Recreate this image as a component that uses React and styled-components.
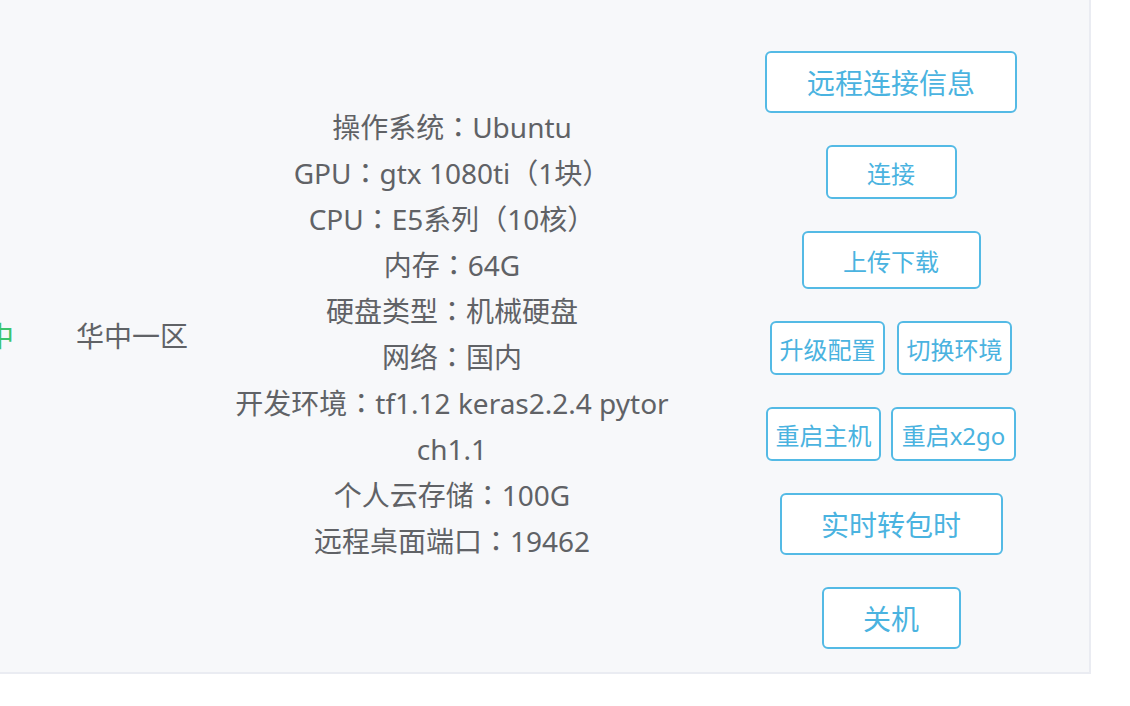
import styled, { createGlobalStyle } from 'styled-components'

const GlobalStyle = createGlobalStyle`
body {
  margin: 0;
  background: #fff;
  font-family: "Noto Sans", "Noto Sans CJK TC", sans-serif;
}
`

const Panel = styled.div`
width: 1089px;
height: 672px;
background: #f7f8fa;
border-right: 2px solid #eaecf2;
border-bottom: 2px solid #eaecf2;
display: flex;
align-items: center;
`

const StatusCell = styled.div`
width: 14px;
flex: none;
overflow: hidden;
display: flex;
justify-content: flex-end;
white-space: nowrap;
font-size: 28px;
line-height: 46px;
color: #3bc46c;
`

const RegionCell = styled.div`
width: 216px;
flex: none;
box-sizing: border-box;
padding-left: 62px;
font-size: 28px;
line-height: 46px;
color: #606266;
`

const SpecCell = styled.div`
width: 444px;
flex: none;
box-sizing: border-box;
padding-bottom: 4px;
text-align: center;
font-size: 28px;
line-height: 46px;
color: #606266;
word-break: break-all;
`

const Actions = styled.div`
width: 400px;
margin-left: 17px;
flex: none;
box-sizing: border-box;
padding-top: 28px;
display: flex;
flex-direction: column;
align-items: center;
gap: 32px;
`

const BtnRow = styled.div`
display: flex;
gap: ${p => p.$gap}px;
`

const Btn = styled.button`
box-sizing: border-box;
width: ${p => p.$w}px;
height: ${p => p.$h}px;
padding: 0;
display: flex;
align-items: center;
justify-content: center;
background: #fff;
border: 2px solid #54bae5;
border-radius: 6px;
color: #4ab3e0;
font-family: "Noto Sans", "Noto Sans CJK SC", sans-serif;
font-size: ${p => p.$fs}px;
white-space: nowrap;
cursor: pointer;
`

const specs = [
  '操作系统：Ubuntu',
  'GPU：gtx 1080ti（1块）',
  'CPU：E5系列（10核）',
  '内存：64G',
  '硬盘类型：机械硬盘',
  '网络：国内',
  '开发环境：tf1.12 keras2.2.4 pytorch1.1',
  '个人云存储：100G',
  '远程桌面端口：19462',
]

export default function App() {
  return (
    <>
      <GlobalStyle />
      <Panel>
        <StatusCell>运行中</StatusCell>
        <RegionCell>华中一区</RegionCell>
        <SpecCell>
          {specs.map(s => <div key={s}>{s}</div>)}
        </SpecCell>
        <Actions>
          <Btn $w={252} $h={62} $fs={28}>远程连接信息</Btn>
          <Btn $w={131} $h={54} $fs={24}>连接</Btn>
          <Btn $w={179} $h={58} $fs={24}>上传下载</Btn>
          <BtnRow $gap={12}>
            <Btn $w={115} $h={54} $fs={24}>升级配置</Btn>
            <Btn $w={115} $h={54} $fs={24}>切换环境</Btn>
          </BtnRow>
          <BtnRow $gap={10}>
            <Btn $w={115} $h={54} $fs={24}>重启主机</Btn>
            <Btn $w={125} $h={54} $fs={24}>重启x2go</Btn>
          </BtnRow>
          <Btn $w={223} $h={62} $fs={28}>实时转包时</Btn>
          <Btn $w={139} $h={62} $fs={28}>关机</Btn>
        </Actions>
      </Panel>
    </>
  )
}
